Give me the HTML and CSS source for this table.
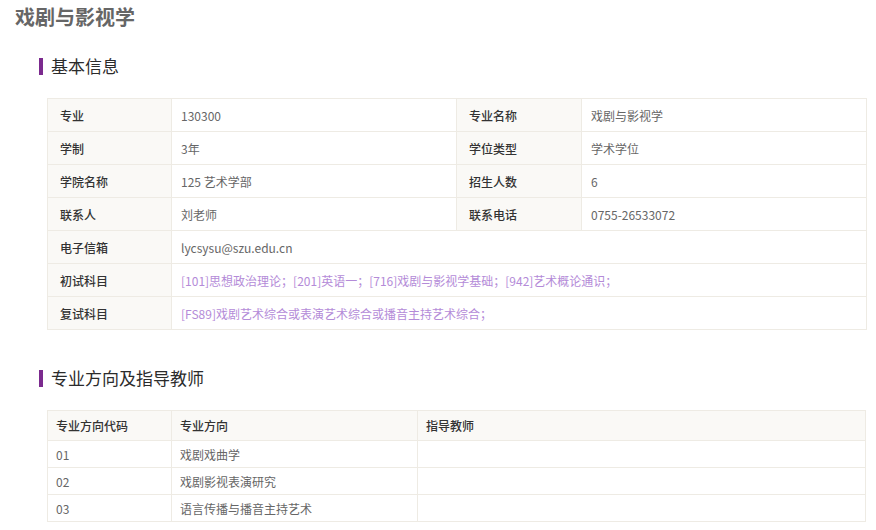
FILE: index.html
```html
<!DOCTYPE html>
<html>
<head>
  <meta charset="utf-8">
  <title>戏剧与影视学</title>
  <link rel="stylesheet" href="styles.css">
</head>
<body>
  <h1 class="page-title">戏剧与影视学</h1>

  <!-- 基本信息 -->
  <h2 class="section-title">基本信息</h2>
  <table class="info-table">
    <colgroup>
      <col class="col-label">
      <col class="col-value">
      <col class="col-label2">
      <col class="col-value">
    </colgroup>
    <tr>
      <th>专业</th><td>130300</td>
      <th>专业名称</th><td>戏剧与影视学</td>
    </tr>
    <tr>
      <th>学制</th><td>3年</td>
      <th>学位类型</th><td>学术学位</td>
    </tr>
    <tr>
      <th>学院名称</th><td>125 艺术学部</td>
      <th>招生人数</th><td>6</td>
    </tr>
    <tr>
      <th>联系人</th><td>刘老师</td>
      <th>联系电话</th><td>0755-26533072</td>
    </tr>
    <tr>
      <th>电子信箱</th><td colspan="3">lycsysu@szu.edu.cn</td>
    </tr>
    <tr>
      <th>初试科目</th>
      <td colspan="3" class="subject">[101]思想政治理论；[201]英语一；[716]戏剧与影视学基础；[942]艺术概论通识；</td>
    </tr>
    <tr>
      <th>复试科目</th>
      <td colspan="3" class="subject">[FS89]戏剧艺术综合或表演艺术综合或播音主持艺术综合；</td>
    </tr>
  </table>

  <!-- 专业方向及指导教师 -->
  <h2 class="section-title section-second">专业方向及指导教师</h2>
  <table class="dir-table">
    <colgroup>
      <col class="col-code">
      <col class="col-dir">
      <col>
    </colgroup>
    <tr>
      <th>专业方向代码</th><th>专业方向</th><th>指导教师</th>
    </tr>
    <tr><td>01</td><td>戏剧戏曲学</td><td></td></tr>
    <tr><td>02</td><td>戏剧影视表演研究</td><td></td></tr>
    <tr><td>03</td><td>语言传播与播音主持艺术</td><td></td></tr>
  </table>
</body>
</html>
```

FILE: styles.css
```css
body {
  margin: 0;
  background-color: #ffffff;
  font-family: "Noto Sans CJK SC", "Noto Sans", sans-serif;
  color: #666666;
}

.page-title {
  margin: 0;
  padding-left: 15px;
  font-size: 20px;
  line-height: 34px;
  font-weight: bold;
  color: #666666;
}

/* Section heading with purple bar */
.section-title {
  display: flex;
  align-items: center;
  gap: 8px;
  margin: 20px 0 0 39px;
  font-size: 17px;
  line-height: 24px;
  font-weight: normal;
  color: #2b2b2b;
}

.section-title::before {
  content: "";
  width: 4px;
  height: 17px;
  background-color: #7b2a8e;
}

.section-second {
  margin-top: 36px;
}

table {
  margin: 20px 0 0 47px;
  width: 819px;
  border-collapse: collapse;
  table-layout: fixed;
  font-size: 12px;
}

th,
td {
  border: 1px solid #eeebe4;
  text-align: left;
  white-space: nowrap;
}

/* Basic info table */
.info-table .col-label { width: 124px; }
.info-table .col-label2 { width: 125px; }
.info-table .col-value { width: 285px; }

.info-table th,
.info-table td {
  height: 32px;
  padding: 0 9px;
}

.info-table th {
  padding-left: 12px;
  background-color: #faf9f6;
  color: #333333;
  font-weight: 500;
}

.info-table td {
  color: #666666;
}

.info-table td.subject {
  color: #b48bd8;
}

/* Direction table */
.dir-table .col-code { width: 124px; }
.dir-table .col-dir { width: 246px; }

.dir-table th,
.dir-table td {
  padding: 0 8px;
}

.dir-table th {
  height: 29px;
  background-color: #faf9f6;
  color: #333333;
  font-weight: 500;
}

.dir-table td {
  height: 26px;
  color: #666666;
}
```
